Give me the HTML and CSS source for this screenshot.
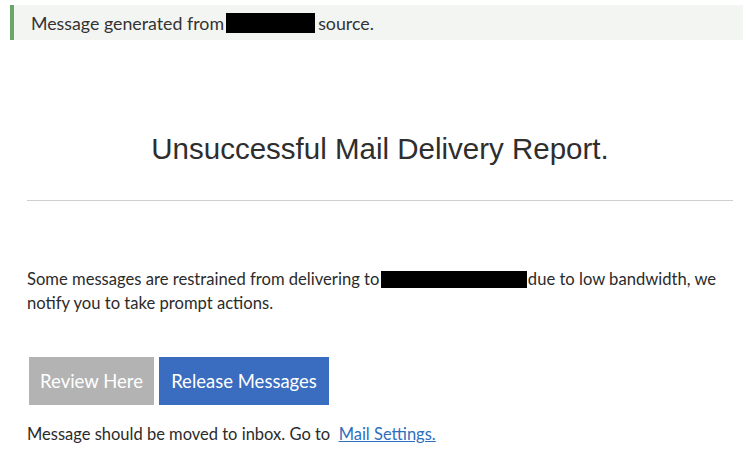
FILE: index.html
```html
<!DOCTYPE html>
<html>
<head>
<meta charset="utf-8">
<link rel="stylesheet" href="styles.css">
</head>
<body>
<div class="page">
  <div class="banner">Message generated from <span class="redact redact-banner"></span> source.</div>
  <div class="content">
    <h1 class="title">Unsuccessful Mail Delivery Report.</h1>
    <hr class="rule">
    <p class="message">Some messages are restrained from delivering to <span class="redact redact-mail"></span> due to low bandwidth, we notify you to take prompt actions.</p>
    <div class="actions">
      <a class="btn btn-gray" href="#">Review Here</a>
      <a class="btn btn-blue" href="#">Release Messages</a>
    </div>
    <p class="footer">Message should be moved to inbox. Go to&nbsp; <a class="link" href="#">Mail Settings.</a></p>
  </div>
</div>
</body>
</html>
```
FILE: styles.css
```css
html, body {
  margin: 0;
  padding: 0;
  background: #ffffff;
}
.page {
  width: 755px;
  height: 457px;
  overflow: hidden;
  font-family: Lato, "Open Sans", sans-serif;
  color: #2b2b2b;
}
.banner {
  margin: 5px 12px 0 10px;
  height: 35px;
  box-sizing: border-box;
  border-left: 4px solid #6aa56a;
  background: #f3f5f3;
  padding-left: 17px;
  font-size: 17.8px;
  color: #333;
  display: flex;
  align-items: center;
  white-space: pre;
}
.redact {
  display: inline-block;
  background: #000;
}
.redact-banner {
  width: 89px;
  height: 20px;
  margin: 0 -1px 0 -3px;
}
.content {
  padding: 0 22px 0 27px;
}
.title {
  margin: 92px 0 0 0;
  font-family: "Liberation Sans", Arial, sans-serif;
  font-weight: normal;
  font-size: 29.5px;
  line-height: 34px;
  text-align: center;
  color: #2e2e2e;
}
.rule {
  margin: 34px 0 0 0;
  border: 0;
  height: 1px;
  background: #cfcfcf;
}
.message {
  margin: 66px 0 0 0;
  font-size: 16.6px;
  line-height: 24px;
  color: #2b2b2b;
}
.redact-mail {
  width: 146px;
  height: 17px;
  margin: 0 -3px 0 -3px;
  vertical-align: -3px;
}
.actions {
  display: flex;
  gap: 5px;
  margin: 42px 0 0 2px;
}
.btn {
  display: flex;
  align-items: center;
  justify-content: center;
  height: 48px;
  font-size: 18.5px;
  color: #fff;
  text-decoration: none;
}
.btn-gray {
  width: 125px;
  background: #b3b3b3;
}
.btn-blue {
  width: 170px;
  background: #3a6cbf;
}
.footer {
  margin: 18px 0 0 0;
  font-size: 16.5px;
  line-height: 22px;
  color: #2b2b2b;
}
.link {
  color: #2f6fc0;
  text-decoration: underline;
}
```
